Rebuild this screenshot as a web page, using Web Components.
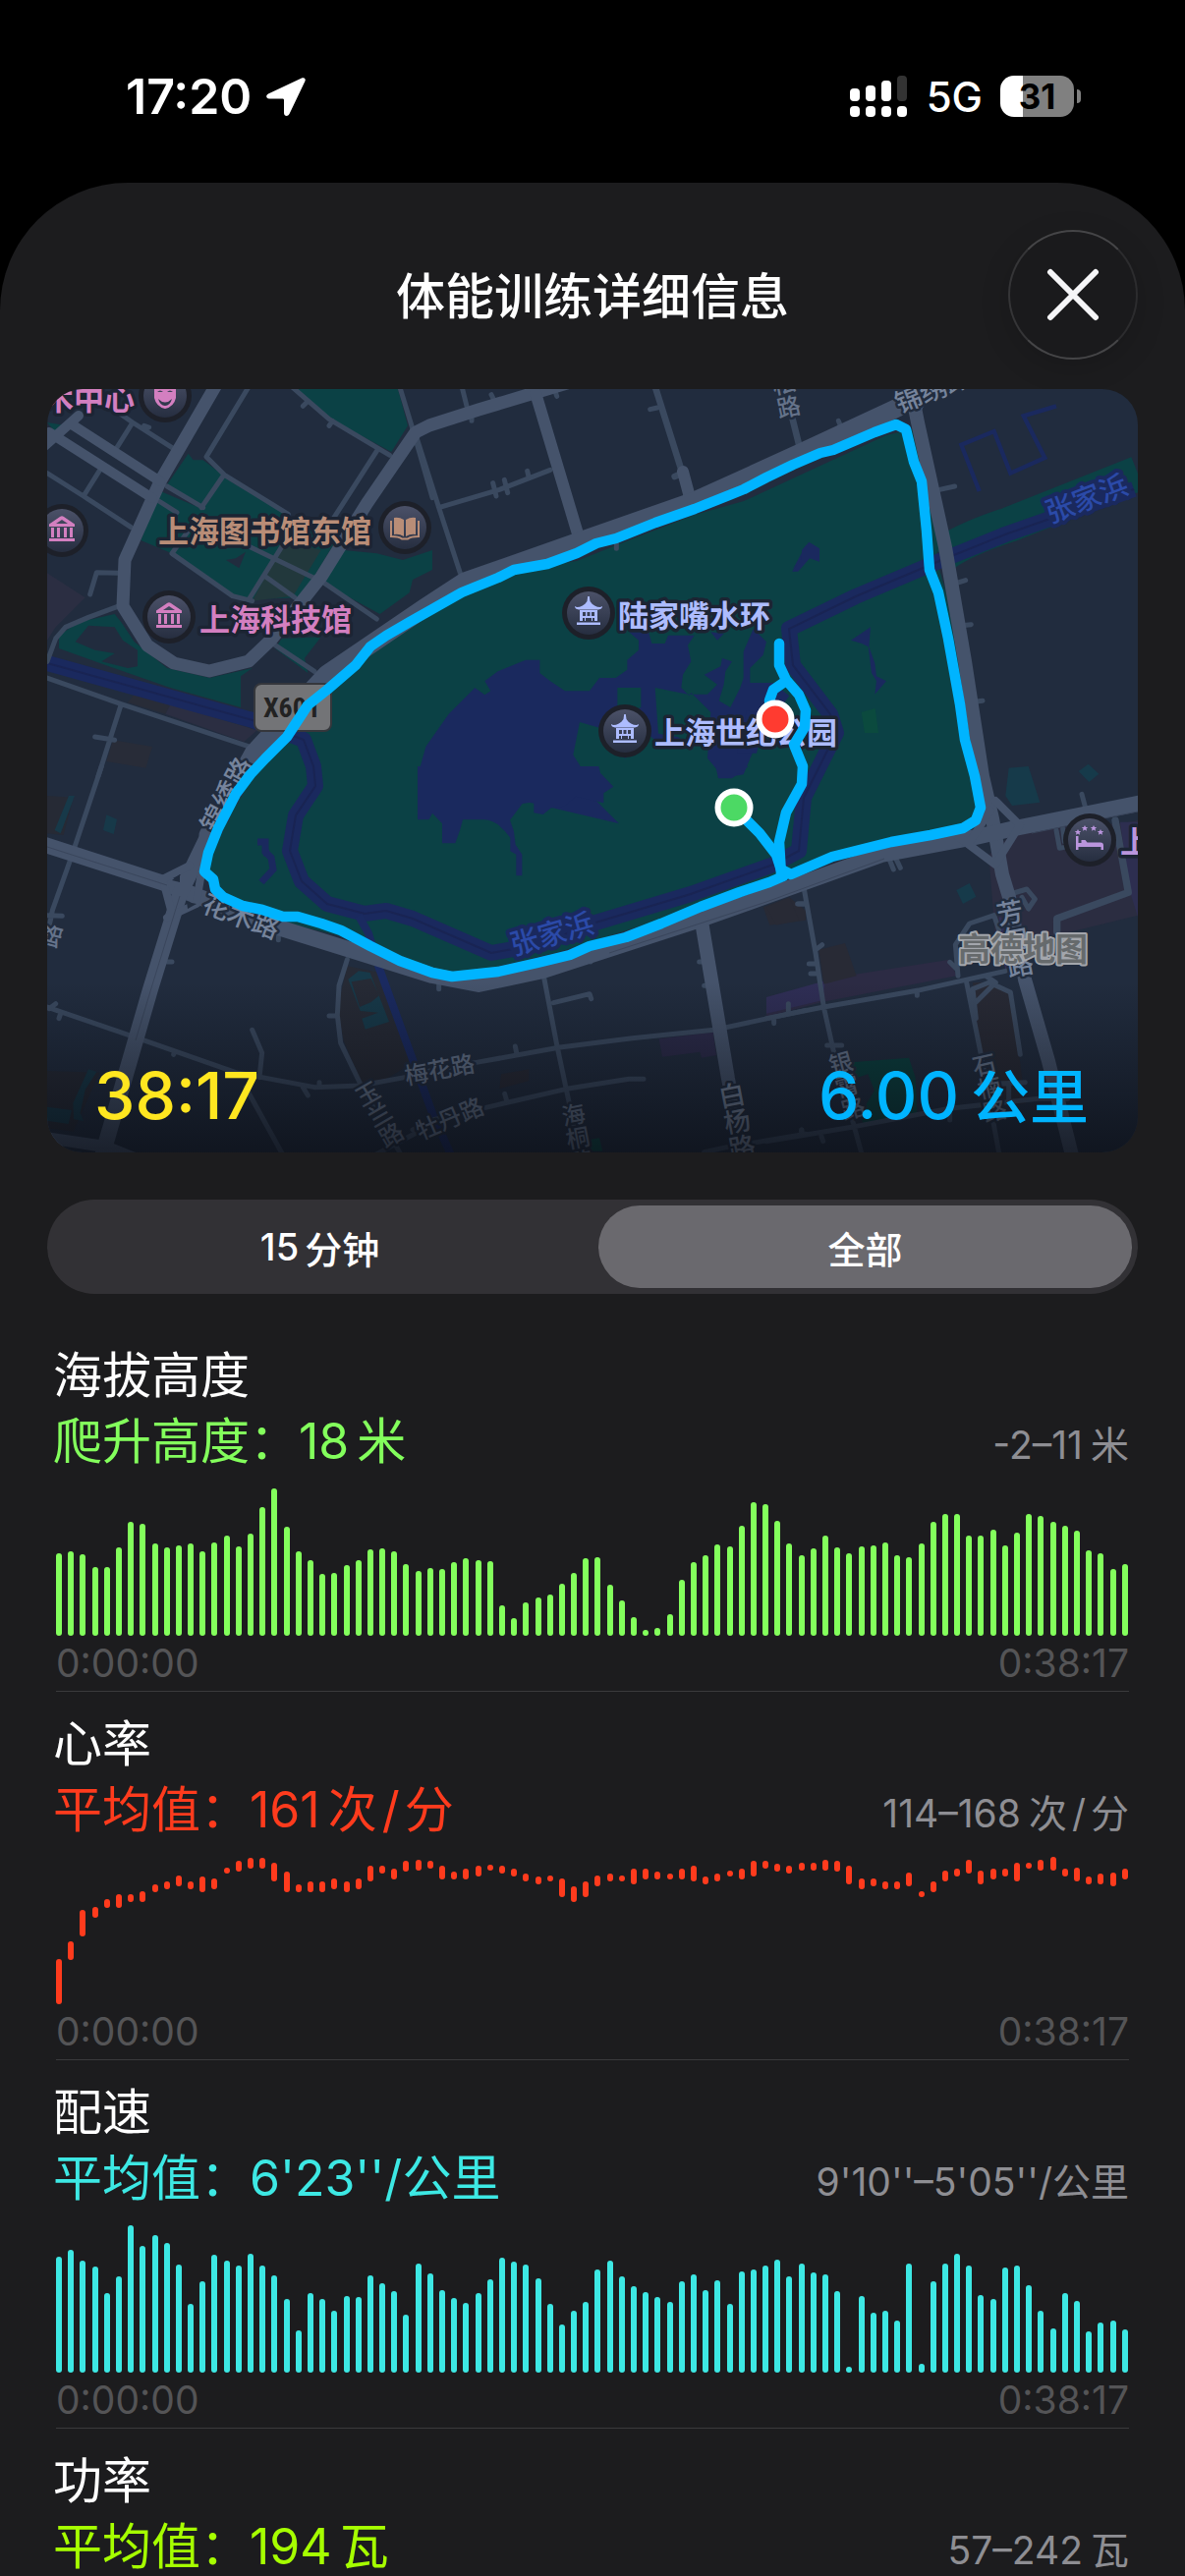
<!DOCTYPE html>
<html lang="zh-CN">
<head>
<meta charset="utf-8">
<meta name="viewport" content="width=device-width, initial-scale=1">
<title>体能训练详细信息</title>
<style>
  html, body {
    height: 100%;
    margin: 0;
    background: #000;
  }
  body {
    display: flex;
    flex-direction: column;
    overflow: hidden;
    color: #fff;
    font-family: Inter, "Noto Sans CJK SC", sans-serif;
  }
  .slash { margin: 0 5px; }
</style>
</head>
<body>

<status-bar time="17:20" network="5G" battery="31"></status-bar>

<workout-sheet>
  <span slot="title">体能训练详细信息</span>
  <route-map>
    <span slot="duration">38:17</span>
    <span slot="distance">6.00</span>
    <span slot="unit">公里</span>
  </route-map>
  <range-switch></range-switch>
  <metric-chart name="elevation" color="#83ff5c">
    <span slot="title">海拔高度</span>
    <span slot="label">爬升高度：</span><span slot="value">18</span><span slot="unit" class="spaced">米</span>
    <span slot="range">-2–11</span><span slot="range-unit" class="spaced">米</span>
  </metric-chart>
  <metric-chart name="heart" color="#ff3b1d">
    <span slot="title">心率</span>
    <span slot="label">平均值：</span><span slot="value">161</span><span slot="unit" class="spaced">次<span class="slash">/</span>分</span>
    <span slot="range">114–168</span><span slot="range-unit" class="spaced">次<span class="slash">/</span>分</span>
  </metric-chart>
  <metric-chart name="pace" color="#3de8e4">
    <span slot="title">配速</span>
    <span slot="label">平均值：</span><span slot="value">6'23''</span><span slot="unit">/公里</span>
    <span slot="range">9'10''–5'05''</span><span slot="range-unit">/公里</span>
  </metric-chart>
  <metric-chart name="power" color="#a6ff00">
    <span slot="title">功率</span>
    <span slot="label">平均值：</span><span slot="value">194</span><span slot="unit" class="spaced">瓦</span>
    <span slot="range">57–242</span><span slot="range-unit" class="spaced">瓦</span>
  </metric-chart>
</workout-sheet>

<template id="statusBarTemplate">
  <style>
    :host {
      display: flex;
      flex: none;
      justify-content: space-between;
      align-items: center;
      box-sizing: border-box;
      height: 186px;
      padding: 10px 113px 0 128px;
    }
    div {
      display: flex;
      align-items: center;
    }
    .time {
      gap: 14px;
      font-size: 50px;
      font-weight: 600;
    }
    .signal {
      gap: 18px;
      font-size: 42px;
      font-weight: 500;
    }
    .battery {
      position: relative;
      justify-content: center;
      width: 75px;
      height: 42px;
      border-radius: 14px;
      background: linear-gradient(90deg, #fff 31%, #808080 31%);
      color: #000;
      font-size: 35px;
      font-weight: 700;
    }
    .battery::after {
      content: "";
      position: absolute;
      left: 78px;
      width: 4px;
      height: 14px;
      border-radius: 0 4px 4px 0;
      background: #808080;
    }
    svg { display: block; }
  </style>
  <div class="time">
    <span class="clock"></span>
    <svg width="42" height="42" viewBox="0 0 42 42"><path d="M37 2.500 3 18.500c-3 1.500-2 5 1 5h13.500c1 0 1.500.5 1.500 1.500V38c0 3.500 4 4 5.500 1L40.500 5.500c1-2.500-1-4-3.500-3z" fill="#fff"/></svg>
  </div>
  <div class="signal">
    <svg width="60" height="42" viewBox="0 0 60 42" fill="#fff">
      <rect x="0" y="13" width="10" height="13" rx="4"/>
      <rect x="16" y="10" width="10" height="16" rx="4"/>
      <rect x="32" y="5" width="10" height="21" rx="4"/>
      <rect x="48" y="0" width="10" height="26" rx="4" fill="#333"/>
      <rect x="0" y="31" width="10" height="11" rx="4"/>
      <rect x="16" y="31" width="10" height="11" rx="4"/>
      <rect x="32" y="31" width="10" height="11" rx="4"/>
      <rect x="48" y="31" width="10" height="11" rx="4"/>
    </svg>
    <span class="network"></span>
    <div class="battery"></div>
  </div>
</template>

<template id="workoutSheetTemplate">
  <style>
    :host {
      display: block;
      flex: 1;
      min-height: 0;
      overflow: hidden;
      box-sizing: border-box;
      padding: 0 48px;
      border-radius: 130px 130px 0 0;
      background: #1c1c1e;
    }
    header {
      display: grid;
      grid-template-columns: 132px 1fr 132px;
      align-items: center;
      padding: 48px 0 30px;
    }
    h1 {
      grid-column: 2;
      margin: 0;
      padding-top: 4px;
      font-size: 50px;
      font-weight: 500;
      line-height: 66px;
      text-align: center;
    }
    button {
      display: grid;
      place-items: center;
      width: 132px;
      height: 132px;
      padding: 0;
      border: 2px solid #2c2c2e;
      border-color: #454547 #2c2c2e #454547 #353537;
      border-radius: 50%;
      background: #1a1a1c;
      box-shadow: 0 8px 30px rgba(0, 0, 0, 0.15);
    }
  </style>
  <header>
    <h1><slot name="title"></slot></h1>
    <button type="button" aria-label="关闭">
      <svg width="54" height="54" viewBox="0 0 54 54" fill="none" stroke="#f5f5f7" stroke-width="6" stroke-linecap="round"><path d="M4 4l46 46M50 4 4 50"/></svg>
    </button>
  </header>
  <slot></slot>
</template>

<template id="routeMapTemplate">
  <style>
    :host {
      display: block;
      position: relative;
      overflow: hidden;
      aspect-ratio: 1110 / 777;
      border-radius: 36px;
      background: #212c3e;
    }
    svg {
      display: block;
      width: 100%;
      height: 100%;
    }
    .totals {
      position: absolute;
      inset: auto 0 0 0;
      display: flex;
      justify-content: space-between;
      align-items: baseline;
      padding: 0 50px 16px 48px;
      font-size: 66px;
      line-height: 80px;
      font-weight: 500;
    }
    .duration { color: #ffe620; }
    .distance { color: #00b4ff; }
    .unit {
      margin-left: 12px;
      font-size: 60px;
    }
    text {
      font-family: "Noto Sans CJK SC", sans-serif;
      text-anchor: middle;
      dominant-baseline: central;
      paint-order: stroke;
      stroke-linejoin: round;
    }
    .poi text {
      font-size: 31px;
      font-weight: 700;
      stroke: #1c2433;
      stroke-width: 7px;
      text-anchor: start;
    }
    .street text {
      font-size: 27px;
      font-weight: 500;
      fill: #76849c;
      stroke: #212c3e;
      stroke-width: 5px;
    }
    .street .small {
      font-size: 24px;
      fill: #65738a;
    }
    .column { writing-mode: vertical-rl; dominant-baseline: auto; }
    .water text {
      font-size: 29px;
      font-weight: 500;
      fill: #2b4aa8;
      stroke: #1a295e;
      stroke-width: 8px;
    }
    .shield {
      font-family: "Liberation Sans Narrow", "Roboto Condensed", Roboto, sans-serif;
      font-size: 28px;
      font-weight: 700;
      fill: #222;
    }
    .brand {
      font-size: 33px;
      font-weight: 700;
      fill: #666a6c;
      stroke: #a3a6ac;
      stroke-width: 4px;
    }
  </style>
  <svg viewBox="48 396 1110 777" preserveAspectRatio="xMidYMid slice" role="img" aria-label="路线">
    <defs>
      <linearGradient id="shade" x1="0" y1="0" x2="0" y2="1">
        <stop offset="0" stop-color="#0a0d14" stop-opacity="0"/>
        <stop offset="1" stop-color="#0a0d14" stop-opacity=".72"/>
      </linearGradient>
      <linearGradient id="disc" x1="0" y1="0" x2="0" y2="1">
        <stop offset="0" stop-color="#4b5168"/>
        <stop offset="1" stop-color="#262e40"/>
      </linearGradient>
      <g id="badge">
        <circle r="27" fill="#1d2029"/>
        <circle r="22" fill="url(#disc)"/>
      </g>
      <g id="museum">
        <path fill-rule="evenodd" d="M-13-6.500-2-14q2-1.500 4 0l11 7.500V-4h-26zM-6-7H6L0-11z"/>
        <path d="M-11-3h3V7h-3zM-5-3h3V7h-3zM2-3h3V7H2zM8-3h3V7H8zM-13 8h26v3h-26z"/>
      </g>
      <g id="pavilion">
        <path d="M-.8-17H.8l.7 5C4-8 8-6 12-6l2-1q0 3-4 3.500H-10Q-14-4-14-7l2 1c4 0 8-2 10.500-6z"/>
        <path fill-rule="evenodd" d="M-9-3H9V8H6V5H-6v3h-3zM-6-1v4h3v-4zM-1.500-1v4h3v-4zM3-1v4h3v-4zM-3 5v3h-1V5zM4 5v3H3V5zM-12 9.500h24v2.500h-24z"/>
      </g>
    </defs>

    <!-- parks and building blocks -->
    <g transform="translate(40 390) scale(.33333)">
      <g fill="#0b4145">
        <path d="M780 18h315l30 112-50 80-185-100zM455 215l15 20h30l60 45-65 95-105-65zM560 285l340 205-100 165-160 5-40-10-195-130-95-40 60-150 130 55zM930 510l100 10 80 20 90-30v60l-60 30-10 40-90 65-175-95z"/>
        <path d="M60 770l60-40 110-25 20 25 40 60 100 80 130 30 130-30-35 25v95L400 930 200 860 60 810zM720 810l20-30 120-5-50 65 10 45z"/>
        <path d="M24 120l60 10-30 25z"/>
      </g>
      <path d="M110 790l40-50 80 5 25 40 45 30v50l-30 5-80-20 40-25-60-10zM570 540l30-5 30-20-20 50z" fill="#212c3e"/>
      <path d="M750 480l110 30-85 140-125 15z" fill="#22383c"/>
      <path d="M24 580l116 75-90 90-26 40zM400 980l265 80-40 35-240-85z" fill="#2b2e42"/>
      <path d="M290 950l110 30-15 30-115-35zM225 1090l120 20-20 65-120-20z" fill="#282c38"/>
    </g>
    <g transform="translate(40 780) scale(.33333)">
      <path d="M24 90l80 5-30 115-50-5zM24 930l160 5-80 180-80-10zM940 610l100 20 110 270-100 60-60 20-60-140-20-100z" fill="#262a35"/>
      <path d="M90 90h18L65 205l-18-10zM205 148l32 14-10 45-32-12zM24 1040l75 10-10 42-65-10zM150 925l25 8-35 55-15 70 10 25-30-5-2-50z" fill="#173949"/>
      <path fill-rule="evenodd" d="M943 650l32-25 35 5 58 150-73 23-10-33 50-18-55-5zM953 658l25 77 35-15 25-20-25-52z" fill="#173949"/>
    </g>
    <g transform="translate(420 780) scale(.33333)">
      <path d="M752 832l165-20 10 70-45 8-5-18-115 15z" fill="#2c2b4a"/>
      <path d="M1070 430l80-30 50 40v30l-110 15zM270 940l85-15v35l-90 25z" fill="#282a35"/>
      <path d="M540 1140l30-5 10 40h-40z" fill="#0b4a45"/>
    </g>
    <g transform="translate(780 780) scale(.33333)">
      <path d="M740 215l150-30 190-10 54-10v290l-245 60-190 10-20-255z" fill="#2b2d41"/>
      <path d="M1080 170h54v290l-25-80z" fill="#2d2e50"/>
      <path d="M0 705l270-70 290-45 20 50-410 80-170 45z" fill="#2c2b44"/>
      <path d="M0 705l180-50-10 60L0 755zM710 460l60 15 10 150-50 5z" fill="#2f2e55"/>
      <path d="M160 560l80-20 35 100-100 25zM630 660l60 0 60 40 40 330-120 10zM0 430l70-30 30 70-70 15z" fill="#282a35"/>
      <path d="M740 5l60-5 35 110-85 10-20-30zM953 15l30-22 32 30-30 25zM580 378l40-21 20 41-40 22z" fill="#163a4a"/>
      <path d="M240 905l195-15 20 60 5 110-165 30z" fill="#0a403f"/>
      <path d="M250 960l60-20 20 50-30 50-50-10z" fill="#212c3e"/>
    </g>
    <path d="M958 566q20-16 69-32l131-52" stroke="#0b4145" stroke-width="36" fill="none"/>

    <path d="M208 887l14-44 33-53 37-40 70-73 31-30 77-44 53-23 64-9 40-16 80-31 50-14 145-67 30-7 15 50 5 50 3 40 20 70 17 114 6 63-5 13-13 8-71 14-60 15-100 33-80 31-100 32-73 17-47 5-30-5-60-30-60-15-70-23z" fill="#0b4145"/>

    <!-- lake and canals -->
    <g transform="translate(420 390) scale(.33333)" fill="#1a295e">
      <path d="M15 1200l25-90 70-100 80-80 30 22 18-12-18-30 40-30 85-35h43v40l32 25 45 30h75l30-40h50l35-25v-30l35-30v-30l-30-25h60l10 35h40l10-25h80l-20 30 10 50-25 40-5 40 20 20h60l30-30-40-30 50-25 5-25 30 10-20 30-5 40-15 50 35 20 30-60 10-30v-80l30-70 40 40-10 40-40 40v45h70l50 40-90 120-50 120-60 10-50-60 10-140-60-60-20 30-40 60 30 60-50 20-60-50-60 80-40-20-30-70-70-20-20 100 50 80 0 40 90 90z"/>
      <path d="M625 930h72v60l-72 30z" fill="#0b4145"/>
      <path d="M740 930l100 20 60 60-40 80-110-20z" fill="#0b4145"/>
      <path d="M1160 570l30-30 10-45M910 760l40 5-20 20z"/>
      <path d="M1020 1000l60 10-30 120-60 0z"/>
    </g>
    <g transform="translate(420 780) scale(.33333)" fill="#1a295e">
      <path d="M15 0h553l5 20 40 42-30 20v30l-85-20-35 30-40 5-25 20-28-5v-33l-35 5-38 50 12 35 5 40 20 30v65h-18v-65l-18-10V218q-40-55-80-55h-65l-8 30-15 42H90v-60l-30-32-10 20H15z"/>
      <path d="M925 0h100l-50 37h-42z"/>
    </g>
    <g transform="translate(780 390) scale(.33333)">
      <path d="M130 485l32 20v40l-30-10-35 40H78l30-40V510zM258 785l60-40-5 60 18 50 5 40 30 15-35 40 5-40-15-25-10-80-20-10z" fill="#1a295e"/>
      <path d="M650 330l-55-142 100-41 50 128 105-47-65-128 100-30" fill="none" stroke="#1a295e" stroke-width="13"/>
      <path d="M290 1005l42-12 10 75h-42z" fill="#0b4a3e"/>
    </g>
    <path d="M48 675l209 58 52 20 10 27 2 20-20 30-6 36 12 31 26 23 38 10 22-3 27 8 80 35 50-9 53-21 100-30 84-30 26-14 5-54 16-32 17-34-6-19-38-50-4-37 68-33 85-36 67-27 131-46" fill="none" stroke="#1a295e" stroke-width="16" stroke-linejoin="round"/>
    <path d="M48 675l209 58 52 20 10 27 2 20-20 30-6 36 12 31 26 23 38 10 22-3 27 8 80 35 50-9 53-21 100-30 84-30 26-14 5-54 16-32 17-34-6-19-38-50-4-37 68-33 85-36 67-27 131-46" fill="none" stroke="#192453" stroke-width="2"/>
    <path d="M365 932l10 18 10 33 55 150 20 45" fill="none" stroke="#1a2a60" stroke-width="8"/>
    <path d="M262 857h8v10l6 6 2 12-12 13M268 868h6" stroke="#1a295e" stroke-width="7" fill="none"/>

    <!-- side streets, drawn a quarter of the map at a time -->
    <g fill="none" stroke="#3a495f" stroke-width="15" stroke-linecap="round" stroke-linejoin="round">
      <g transform="translate(40 390) scale(.33333)">
        <path d="M640 10L510 225l55 55 195 120M770 10l115 100 185 110M1035 200L900 410M1100 10l40 130 60 210M390 315l110 65M520 440l350 170 160 110M365 360l55 35M560 285l-65 95M470 430l-65 90 185 130 60 15M740 500L640 660M690 590l90 65M220 75l65 45 125 80M285 120l-50 80M24 275l111 70 145 95M185 265l-50 80M240 580l-65-2-20 67M245 680l-95 35-70 30-30 35-26 70M24 900l226 80 390 130M250 980l-70 220M170 1080l60 10M720 800l120 80M320 130l15 5M805 70l10-10M885 130l10-15"/>
      </g>
      <g transform="translate(420 390) scale(.33333)">
        <path d="M10 160l70 220 65 200M80 380l185-55 155-60M150 10l15 60M245 305l10 40M280 295l10 40M350 268l5 22M725 80l22-5M240 35l10 20M180 115v-10M440 40l-5-15M622 490v15"/>
        <path d="M740 10l85 270M1155 90l25 100M800 285l25-10" stroke-width="20"/>
      </g>
      <g transform="translate(780 390) scale(.33333)">
        <path d="M515 328l60-13M565 615l43-13M595 740l30-3M635 973l25-3M220 115l10 25"/>
      </g>
      <g transform="translate(40 780) scale(.33333)">
        <path d="M190 0L95 285 40 440l-16 80M24 455l46 2M24 735l276 95 300 105 240 45 140-5 135-25M940 590l-25 80-5 90 10 85 70 145 110 188M650 805l30 70-8 75M630 980l110 200M885 762h25M30 740l20-15M60 770l5-15M405 597h-15M410 880l3-10M805 980l15 25M855 965v15M1000 1200l150-80M730 530v-15"/>
      </g>
      <g transform="translate(420 780) scale(.33333)">
        <path d="M400 640l40 210 70 330M430 722l110-27 5 15M0 940l190-35 260-47 220-28 250-25 280-60M0 1110l60-30 150-35 260-60 190-30h45M313 855l5 25M281 1000l7 25M80 680v-15M543 597v-10M875 597h10M890 670h10M1175 420h20M890 1178l70-15 240-40M1187 1110v15M1147 725v25M1103 775v10"/>
      </g>
      <g transform="translate(780 780) scale(.33333)">
        <path d="M115 375l35 195 25 165 30 135 85 310M0 770l175-35 285-50 270-60M585 640l-8-95 43-65 75-25 15 45M560 598l20 20M610 655l45 225 55 300M630 680l50-20 65 30 30 190M640 720l60-60-30-20M640 770l-10-90M0 1145l270-45 290-55 270-30h90M690 970l100-5M740 1020v-50M745 390l50-15 25 30-20 30-20-35M963 85l12 45M377 288l11 27M396 283l13 27M98 420h22M150 560l20-15M130 603h25M135 633h20M460 685v15M185 852h45M108 1110v10M168 1130l5 15M560 1060v20M885 195l10 55 25-5M905 190l5 40"/>
        <path d="M887 505v-40l218-80-40-220" stroke-width="22"/>
      </g>
    </g>

    <!-- main roads -->
    <g fill="none" stroke="#45536b" stroke-width="14" stroke-linejoin="round" stroke-linecap="round">
      <path d="M221 390l-58 100-36 80-2 47 25 40 27 18 36 8 40-10 24-23 50-63 46-74 50-73 14-7 50-16 90-27" stroke-width="13"/>
      <path d="M73 432l90 58M50 440l105 67M44 455l36-32" stroke-width="10"/>
      <path d="M545 400l45 150M695 480l8 30" stroke-width="12"/>
      <path d="M212 850l46-83 75-81 100-68 40-26 114-40 120-42 110-50 90-42 73-35" stroke-width="19"/>
      <path d="M930 410l4 20 28 127 20 116 18 117 10 43 10 57 7 23 16 84 24 83 25 100"/>
      <path d="M931 420l14-26" stroke-width="10"/>
      <path d="M40 858l130 42 20 8 90 35 77 24 83 26 47 9 66-14 154-50 73-26 117-42 96-18 40-9 130-26" stroke-width="16"/>
      <path d="M212 850l-29 60-30 97-48 166" stroke-width="16"/>
      <path d="M165 895l28-14M200 920l-30 14M167 900l8 30M200 918l5-30M1013 815l25 25-25 40-40-30M1008 825l-20 30" stroke-width="8"/>
      <path d="M714 938l27 160 8 40"/>
      <path d="M40 1157l67 10 50 20" stroke-width="12"/>
    </g>
    <path d="M48 862l122 39M183 912l-30 97-15 50M620 970l160-52 120-44M1050 848l108-22" stroke="#3a465c" stroke-width="1" fill="none"/>
    <path d="M175 896l8-6 0 8zM190 918l10 2-9 5z" fill="#212c3e"/>

    <g class="street">
      <text transform="translate(229 808) rotate(-62)">锦绣路</text>
      <text transform="translate(246 931) rotate(21)">花木路</text>
      <text transform="translate(949 395) rotate(-22)">锦绣路</text>
      <text class="small column" transform="translate(800 402) rotate(-12)">松路</text>
      <text class="small" transform="translate(50 952) rotate(-75)">路</text>
      <text class="small" transform="translate(447 1087) rotate(-11)">梅花路</text>
      <text class="small" transform="translate(457 1137) rotate(-23)">牡丹路</text>
      <text class="small column" transform="translate(386 1134) rotate(-30)">玉兰路</text>
      <text class="small column" transform="translate(588 1158) rotate(-11)">海桐路</text>
      <text class="column" transform="translate(750 1141) rotate(-11)">白杨路</text>
      <text class="small column" transform="translate(862 1105) rotate(-15)">银霄路</text>
      <text class="small column" transform="translate(1007 1107) rotate(-13)">石楠路</text>
      <text class="column" transform="translate(1033 955) rotate(-11)">芳甸路</text>
    </g>
    <g class="water">
      <text transform="translate(1105 505) rotate(-21)">张家浜</text>
      <text transform="translate(561 948) rotate(-16)">张家浜</text>
    </g>

    <rect x="259" y="696" width="78" height="48" rx="7" fill="#737477" stroke="#35373c" stroke-width="2"/>
    <text class="shield" x="297" y="720">X601</text>

    <g class="poi">
      <text x="44" y="403" fill="#d37fc0">术中心</text>
      <text x="161" y="538" fill="#b98d77">上海图书馆东馆</text>
      <text x="203" y="628" fill="#d37fc0">上海科技馆</text>
      <text x="629" y="624" fill="#adbcff">陆家嘴水环</text>
      <text x="666" y="743" fill="#adbcff">上海世纪公园</text>
      <text x="1140" y="854" fill="#ba95dd">上</text>
    </g>
    <g transform="translate(168 403)"><use href="#badge"/><path fill-rule="evenodd" d="M-11-12q11-5 22 0V2Q9 11 0 13-9 11-11 2zM-8-4q3-3 6 0zM2-4q3-3 6 0zM-7 3q7 7 14 0-2 7-7 7t-7-7z" fill="#d37fc0"/></g>
    <g transform="translate(63 540)"><use href="#badge"/><use href="#museum" fill="#d37fc0"/></g>
    <g transform="translate(172 628)"><use href="#badge"/><use href="#museum" fill="#d37fc0"/></g>
    <g transform="translate(412 537)"><use href="#badge"/><path d="M-11-10q5-1 10 2V9q-5-3-10-2zM11-10q-5-1-10 2V9q5-3 10-2z" fill="#b98d77"/><path d="M-14-7V9q8 0 11 2.500h6Q6 9 14 9V-7" fill="none" stroke="#b98d77" stroke-width="2"/></g>
    <g transform="translate(599 624)"><use href="#badge"/><use href="#pavilion" fill="#adbcff"/></g>
    <g transform="translate(636 744)"><use href="#badge"/><use href="#pavilion" fill="#adbcff"/></g>
    <g transform="translate(1109 855)" fill="#ba95dd"><use href="#badge"/>
      <path d="M-14-4h2.500v7h3V0h4l2 2.500H11q3 0 3 3V10h-2.500V7h-23v3H-14z"/>
      <path id="star" d="M-5-15l1 2h2.200l-1.700 1.500.6 2.300-2.100-1.200-2.100 1.200.6-2.300L-8.200-13H-6z"/>
      <use href="#star" x="9"/><use href="#star" x="-7" y="4"/><use href="#star" x="16" y="4"/>
    </g>
    <text class="brand" x="1041" y="964">高德地图</text>

    <!-- recorded track -->
    <g fill="none" stroke="#00b4ff" stroke-width="10.500" stroke-linecap="round" stroke-linejoin="round">
      <path d="M747 822L773 848L790 870L797 892L783 898L753 908L713 923L673 940L637 954L600 963L580 972L547 980L507 989L460 994L440 990L407 978L377 963L347 947L327 940L303 933L288 933L267 926L247 922L227 913L219 905L217 895L208 887L212 868L222 843L240 808L255 788L270 772L292 750L313 718L333 702L362 677L377 658L393 647L417 633L440 620L470 603L507 588L523 580L557 574L587 563L607 553L627 548L667 532L707 518L757 498L780 486L807 473L835 461L848 458L890 440L912 432L922 437L930 470L938 490L943 540L946 580L955 603L965 650L977 717L982 753L992 790L998 822L993 835L980 843L947 850L907 857L847 872L805 890L797 886"/>
      <path d="M795 890L793 857L800 827L816 798L817 780L808 758L819 740L820 723L813 707L800 692L793 677L793 655"/>
      <path d="M800 693L787 702L783 713L785 732"/>
    </g>
    <rect x="48" y="1000" width="1110" height="173" fill="url(#shade)"/>
    <circle cx="747" cy="822" r="16.500" fill="#4cd964" stroke="#fff" stroke-width="6"/>
    <circle cx="789" cy="732" r="16.500" fill="#ff3b30" stroke="#fff" stroke-width="6"/>
  </svg>
  <div class="totals">
    <span class="duration"><slot name="duration"></slot></span>
    <span class="distance"><slot name="distance"></slot><span class="unit"><slot name="unit"></slot></span></span>
  </div>
</template>

<template id="rangeSwitchTemplate">
  <style>
    :host {
      display: grid;
      grid-template-columns: 1fr 1fr;
      gap: 12px;
      margin: 48px 0 50px;
      padding: 6px;
      border-radius: 48px;
      background: #323135;
    }
    label {
      display: flex;
      justify-content: center;
      align-items: center;
      gap: 6px;
      height: 84px;
      border-radius: 42px;
      font-size: 38px;
      font-weight: 500;
    }
    label:has(input:checked) { background: #6a696e; }
    input {
      position: absolute;
      opacity: 0;
      margin: 0;
    }
  </style>
  <label><input type="radio" name="range"><span>15</span><span>分钟</span></label>
  <label><input type="radio" name="range" checked><span>全部</span></label>
</template>

<template id="metricChartTemplate">
  <style>
    :host {
      display: block;
      padding: 0 9px 20px;
    }
    h2 {
      margin: 0 0 0 -3px;
      font-size: 50px;
      font-weight: 400;
      line-height: 67px;
    }
    .summary {
      display: flex;
      justify-content: space-between;
      align-items: baseline;
      height: 67px;
      margin: 0 0 14px -3px;
      line-height: 67px;
    }
    .average {
      color: var(--metric);
      font-size: 50px;
    }
    .range {
      color: #8e8e93;
      font-size: 39px;
    }
    ::slotted(.spaced) { margin-left: 8px; }
    .bars {
      display: flex;
      justify-content: space-between;
      align-items: flex-end;
      height: 150px;
    }
    .bars i {
      width: 6px;
      border-radius: 3px;
      background: var(--metric);
    }
    .axis {
      display: flex;
      justify-content: space-between;
      border-bottom: 1px solid #3a3a3c;
      color: #545456;
      font-size: 39px;
      line-height: 56px;
    }
  </style>
  <h2><slot name="title"></slot></h2>
  <div class="summary">
    <span class="average"><slot name="label"></slot><slot name="value"></slot><slot name="unit"></slot></span>
    <span class="range"><slot name="range"></slot><slot name="range-unit"></slot></span>
  </div>
  <div class="bars"></div>
  <div class="axis"><span>0:00:00</span><span>0:38:17</span></div>
</template>

<script>
  // one entry per bar: height, or [distance from the base line, height]
  const samples = {
    elevation: [84,86,83,70,70,90,116,114,94,90,92,94,86,95,102,91,104,131,150,111,86,77,63,64,72,77,88,89,86,73,
      66,69,68,75,79,77,76,31,18,34,39,42,53,64,79,80,52,36,19,6,8,22,57,75,82,93,91,112,136,134,
      117,94,82,89,102,90,84,91,92,95,82,80,94,116,124,124,102,102,108,92,105,124,122,116,112,107,87,84,68,73],
    heart: [[0,46],[45,19],[69,27],[88,11],[98,9],[98,14],[104,8],[104,11],[114,8],[117,8],[120,11],[117,8],[114,16],[117,11],[133,6],
      [135,11],[138,11],[138,11],[125,19],[114,21],[114,8],[114,11],[114,11],[117,11],[114,11],[117,11],[125,16],[133,8],[127,11],[135,11],
      [136,11],[138,8],[127,14],[127,8],[127,11],[130,11],[136,6],[133,8],[130,8],[125,8],[122,8],[125,6],[109,19],[104,16],[109,16],
      [120,11],[125,8],[125,6],[122,16],[127,11],[127,8],[127,6],[127,11],[125,16],[122,8],[125,8],[130,6],[127,11],[130,16],[138,8],
      [135,8],[133,8],[136,8],[136,8],[136,11],[135,11],[122,19],[117,11],[120,8],[117,8],[117,8],[120,14],[109,6],[114,11],[125,11],
      [130,8],[133,14],[122,14],[127,11],[130,8],[125,19],[138,6],[136,11],[136,14],[130,8],[125,14],[122,8],[122,11],[120,14],[127,11]],
    pace: [118,125,114,108,81,98,150,129,140,132,110,70,93,120,114,109,121,109,99,75,43,81,75,63,78,77,99,91,83,59,
      111,101,84,76,71,81,95,117,113,110,96,70,49,63,72,105,114,98,88,82,77,72,93,100,84,94,70,103,105,109,
      115,98,111,102,100,83,6,78,61,63,53,111,9,93,111,121,109,79,75,107,109,89,63,45,81,73,42,51,53,44],
    power: []
  }

  class TemplateElement extends HTMLElement {
    constructor(id) {
      super()
      this._shadowRoot = this.attachShadow({ mode: 'open' })
      this._shadowRoot.appendChild(document.getElementById(id).content.cloneNode(true))
    }
  }

  class StatusBar extends TemplateElement {
    constructor() {
      super('statusBarTemplate')
      this._shadowRoot.querySelector('.clock').textContent = this.getAttribute('time')
      this._shadowRoot.querySelector('.network').textContent = this.getAttribute('network')
      this._shadowRoot.querySelector('.battery').textContent = this.getAttribute('battery')
    }
  }

  class WorkoutSheet extends TemplateElement {
    constructor() { super('workoutSheetTemplate') }
  }

  class RouteMap extends TemplateElement {
    constructor() { super('routeMapTemplate') }
  }

  class RangeSwitch extends TemplateElement {
    constructor() { super('rangeSwitchTemplate') }
  }

  class MetricChart extends TemplateElement {
    constructor() {
      super('metricChartTemplate')
      this.style.setProperty('--metric', this.getAttribute('color'))
      const bars = this._shadowRoot.querySelector('.bars')
      for (const sample of samples[this.getAttribute('name')]) {
        const [base, height] = Array.isArray(sample) ? sample : [0, sample]
        const bar = document.createElement('i')
        bar.style.height = height + 'px'
        bar.style.marginBottom = base + 'px'
        bars.appendChild(bar)
      }
    }
  }

  window.customElements.define('status-bar', StatusBar)
  window.customElements.define('workout-sheet', WorkoutSheet)
  window.customElements.define('route-map', RouteMap)
  window.customElements.define('range-switch', RangeSwitch)
  window.customElements.define('metric-chart', MetricChart)
</script>
</body>
</html>
